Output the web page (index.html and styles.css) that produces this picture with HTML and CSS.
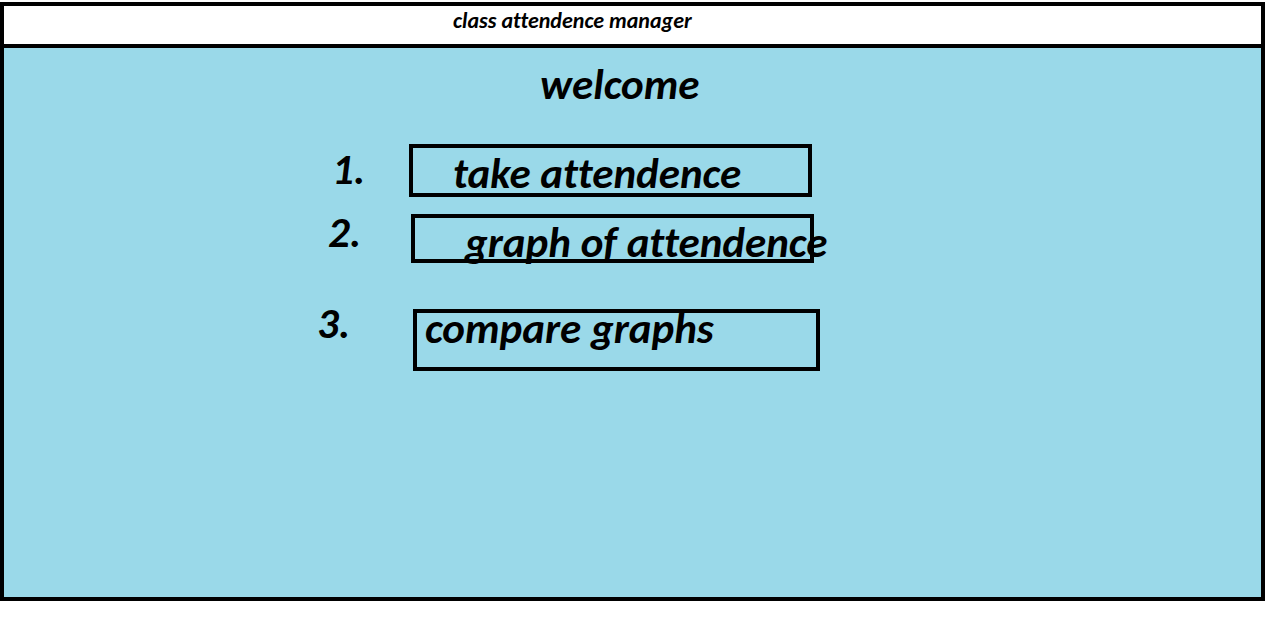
FILE: index.html
```html
<!DOCTYPE html>
<html lang="en">
<head>
<meta charset="utf-8">
<title>class attendence manager</title>
<link rel="stylesheet" href="styles.css">
</head>
<body>
<div class="window">
<header class="titlebar">class attendence manager</header>
<main class="content">
<h1 class="welcome">welcome</h1>
<ol class="menu">
<li class="item item-take"><span class="number">1.</span><button class="option" type="button">take attendence</button></li>
<li class="item item-graph"><span class="number">2.</span><button class="option" type="button">graph of attendence</button></li>
<li class="item item-compare"><span class="number">3.</span><button class="option" type="button">compare graphs</button></li>
</ol>
</main>
</div>
</body>
</html>
```
FILE: styles.css
```css
* { box-sizing: border-box; }
body {
  margin: 0;
  min-height: 100vh;
  padding: 2px 15px 21px 0;
  display: flex;
  background: #fff;
  color: #000;
  font: italic bold 43px/32px Carlito, Calibri, Lato, "Open Sans", sans-serif;
  font-variant-ligatures: none;
}
.window {
  flex: 1;
  display: flex;
  flex-direction: column;
  border: 4px solid #000;
}
.titlebar {
  padding: 3px 0 11px 449px;
  border-bottom: 4px solid #000;
  font-size: 22px;
  line-height: 24px;
}
.content {
  flex: 1;
  padding-top: 13px;
  background: #9ad9e9;
}
.welcome {
  margin: 0 0 35px;
  padding-left: 536px;
  font-size: 43px;
  line-height: 48px;
}
.menu {
  margin: 0;
  padding: 0;
  list-style: none;
}
.item { display: flex; }
.number { flex: none; }
.option {
  flex: none;
  width: 403px;
  border: 4px solid #000;
  background: transparent;
  color: inherit;
  font: inherit;
  font-variant-ligatures: none;
  text-align: left;
  white-space: nowrap;
}
.item-take { padding-left: 328px; }
.item-take .number { width: 77px; line-height: 52px; }
.item-take .option { height: 53px; padding: 6px 40px 0; }
.item-graph { margin-top: 17px; padding-left: 324px; }
.item-graph .number { width: 83px; line-height: 38px; }
.item-graph .option { height: 49px; padding: 8px 50px 0; }
.item-compare { margin-top: 46px; padding-left: 313px; }
.item-compare .number { width: 96px; line-height: 30px; }
.item-compare .option { width: 407px; height: 62px; padding: 0 8px 22px; }
```
